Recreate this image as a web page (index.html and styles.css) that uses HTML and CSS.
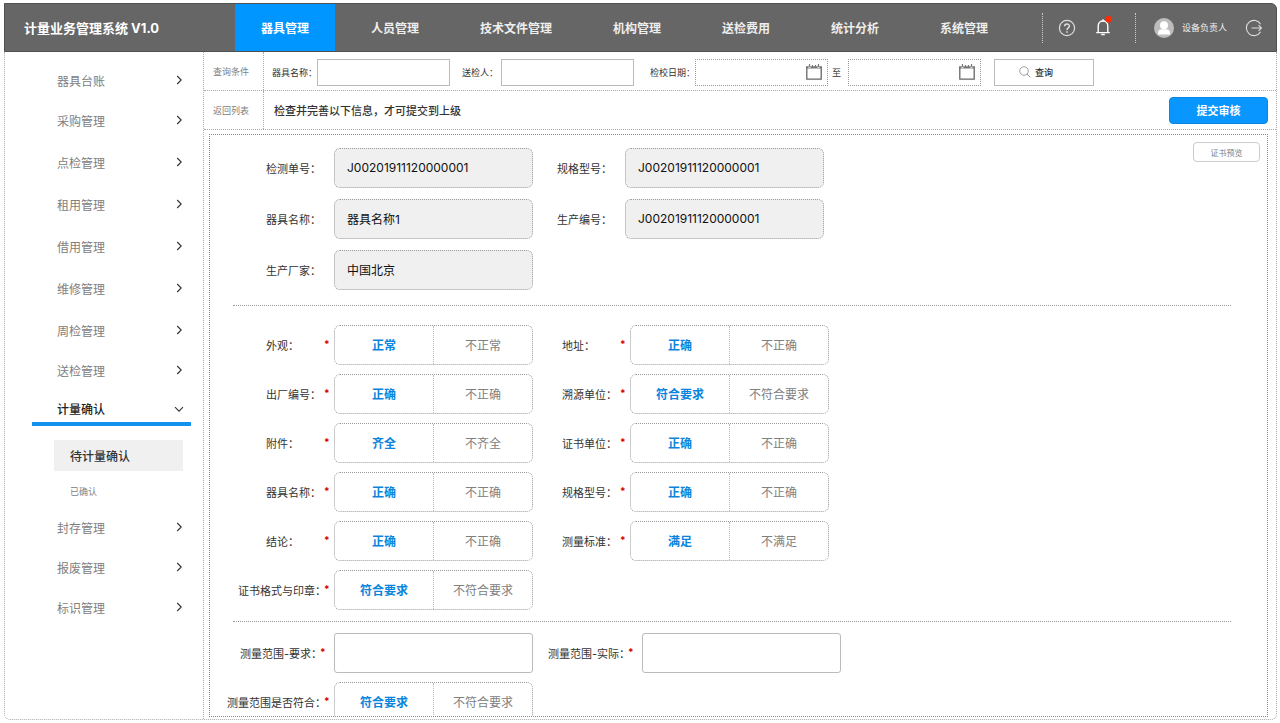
FILE: index.html
```html
<!DOCTYPE html>
<html lang="zh-CN">

<head>
    <meta charset="UTF-8">
    <meta name="viewport" content="width=device-width, initial-scale=1.0">
    <title>计量业务管理系统 V1.0</title>
    <link rel="stylesheet" href="styles.css">
</head>

<body>
    <!-- Shared icons -->
    <svg class="sprite" width="0" height="0" aria-hidden="true">
        <symbol id="arrow" viewBox="0 0 10 10">
            <path d="M3.2 1 L7.2 5 L3.2 9" fill="none" stroke="#333" stroke-width="1.1" />
        </symbol>
        <symbol id="calendar" viewBox="0 0 18 18">
            <path d="M1.8 3.5 V16.2 H16.2 V3.5" fill="none" stroke="#666" stroke-width="1.3" />
            <path d="M1.2 4.4 H16.8" stroke="#777" stroke-width="2.2" />
            <path d="M4.5 1 V4 M7.5 2 V4 M10.5 2 V4 M13.5 1 V4" stroke="#777" stroke-width="1.2" />
            <path d="M3.4 4.4 H5.6 M12.4 4.4 H14.6" stroke="#fff" stroke-width="0.8" />
        </symbol>
    </svg>

    <div class="app">
        <!-- Header Section -->
        <header class="header">
            <h1>计量业务管理系统 V1.0</h1>
            <nav class="main-nav">
                <a href="#" class="active">器具管理</a>
                <a href="#">人员管理</a>
                <a href="#">技术文件管理</a>
                <a href="#">机构管理</a>
                <a href="#">送检费用</a>
                <a href="#">统计分析</a>
                <a href="#">系统管理</a>
            </nav>
            <div class="tools">
                <button type="button" class="icon-btn" aria-label="帮助">
                    <svg width="18" height="18" viewBox="0 0 18 18" fill="none" stroke="#ddd">
                        <circle cx="9" cy="9" r="7.6" stroke-width="1.2" />
                        <path d="M6.6 7.2 C6.6 4.2 11.4 4.2 11.4 7.1 C11.4 9 9 8.9 9 11" stroke-width="1.5" />
                        <path d="M9 12.2 V13.8" stroke-width="1.6" />
                    </svg>
                </button>
                <button type="button" class="icon-btn bell" aria-label="消息">
                    <svg width="18" height="24" viewBox="0 0 18 24" fill="none">
                        <path d="M2.2 16.6 H15.8 M4.2 16.4 V10 C4.2 3.4 13.8 3.4 13.8 10 V16.4" stroke="#fff" stroke-width="1.4" />
                        <path d="M9 3.2 V5.2 M7.2 18.6 H10.8" stroke="#fff" stroke-width="1.5" />
                        <circle cx="14.6" cy="3.3" r="3.3" fill="#ff2b00" />
                    </svg>
                </button>
            </div>
            <div class="user">
                <svg width="20" height="20" viewBox="0 0 20 20">
                    <circle cx="10" cy="10" r="10" fill="#bdbdbd" />
                    <circle cx="10" cy="7.2" r="4" fill="#fff" />
                    <path d="M4 16.6 V14.6 C4 12.4 6 11.2 8 11.2 H12 C14 11.2 16 12.4 16 14.6 V16.6 Z" fill="#fff" />
                </svg>
                <span>设备负责人</span>
                <button type="button" class="icon-btn" aria-label="退出">
                    <svg width="18" height="18" viewBox="0 0 18 18" fill="none" stroke="#ddd" stroke-width="1.1">
                        <path d="M15.6 5.2 A7.6 7.6 0 1 0 15.6 12.8" />
                        <path d="M6.5 9 H16.4 M13.6 6.2 L16.4 9 L13.6 11.8" />
                    </svg>
                </button>
            </div>
        </header>

        <div class="body">
            <!-- Side Menu -->
            <aside class="sidebar">
                <nav>
                    <a href="#" class="item short">器具台账<svg><use href="#arrow" /></svg></a>
                    <a href="#" class="item">采购管理<svg><use href="#arrow" /></svg></a>
                    <a href="#" class="item">点检管理<svg><use href="#arrow" /></svg></a>
                    <a href="#" class="item">租用管理<svg><use href="#arrow" /></svg></a>
                    <a href="#" class="item">借用管理<svg><use href="#arrow" /></svg></a>
                    <a href="#" class="item">维修管理<svg><use href="#arrow" /></svg></a>
                    <a href="#" class="item">周检管理<svg><use href="#arrow" /></svg></a>
                    <a href="#" class="item short">送检管理<svg><use href="#arrow" /></svg></a>
                    <a href="#" class="item open">计量确认<svg><use href="#arrow" /></svg></a>
                    <div class="submenu">
                        <a href="#" class="current">待计量确认</a>
                        <a href="#">已确认</a>
                    </div>
                    <div class="menu-tail">
                        <a href="#" class="item">封存管理<svg><use href="#arrow" /></svg></a>
                        <a href="#" class="item">报废管理<svg><use href="#arrow" /></svg></a>
                        <a href="#" class="item">标识管理<svg><use href="#arrow" /></svg></a>
                    </div>
                </nav>
            </aside>

            <!-- Main Content -->
            <main class="content">
                <form class="bar">
                    <div class="bar-name">查询条件</div>
                    <div class="query">
                        <label for="q-name">器具名称：</label>
                        <input type="text" id="q-name">
                        <label for="q-sender" class="second">送检人：</label>
                        <input type="text" id="q-sender" class="sender">
                        <label for="q-from" class="third">检校日期：</label>
                        <div class="date">
                            <input type="text" id="q-from">
                            <svg><use href="#calendar" /></svg>
                        </div>
                        <label for="q-to" class="to">至</label>
                        <div class="date">
                            <input type="text" id="q-to">
                            <svg><use href="#calendar" /></svg>
                        </div>
                        <button type="button" class="search">
                            <svg width="12" height="12" viewBox="0 0 12 12" fill="none" stroke="#888">
                                <circle cx="5" cy="5" r="4.3" stroke-width="0.8" />
                                <path d="M8 8 L11.4 11.4" stroke-width="0.9" />
                            </svg>
                            查询
                        </button>
                    </div>
                </form>

                <div class="bar">
                    <a href="#" class="bar-name">返回列表</a>
                    <p class="hint">检查并完善以下信息，才可提交到上级</p>
                    <button type="button" class="submit">提交审核</button>
                </div>

                <form class="panel">
                    <button type="button" class="preview">证书预览</button>

                    <!-- Instrument info -->
                    <div class="fields info">
                        <div class="name"><label for="f-no">检测单号：</label></div>
                        <input type="text" id="f-no" value="J00201911120000001" readonly>
                        <div class="name"><label for="f-model">规格型号：</label></div>
                        <input type="text" id="f-model" value="J00201911120000001" readonly>
                        <div class="name"><label for="f-name">器具名称：</label></div>
                        <input type="text" id="f-name" value="器具名称1" readonly>
                        <div class="name"><label for="f-serial">生产编号：</label></div>
                        <input type="text" id="f-serial" value="J00201911120000001" readonly>
                        <div class="name"><label for="f-maker">生产厂家：</label></div>
                        <input type="text" id="f-maker" value="中国北京" readonly>
                    </div>

                    <hr>

                    <!-- Confirmation checks -->
                    <div class="fields checks">
                        <div class="name"><span id="c1">外观：</span><i>*</i></div>
                        <div class="choice" role="radiogroup" aria-labelledby="c1">
                            <label><input type="radio" name="c1" checked><span>正常</span></label>
                            <label><input type="radio" name="c1"><span>不正常</span></label>
                        </div>
                        <div class="name"><span id="c2">地址：</span><i>*</i></div>
                        <div class="choice" role="radiogroup" aria-labelledby="c2">
                            <label><input type="radio" name="c2" checked><span>正确</span></label>
                            <label><input type="radio" name="c2"><span>不正确</span></label>
                        </div>
                        <div class="name"><span id="c3">出厂编号：</span><i>*</i></div>
                        <div class="choice" role="radiogroup" aria-labelledby="c3">
                            <label><input type="radio" name="c3" checked><span>正确</span></label>
                            <label><input type="radio" name="c3"><span>不正确</span></label>
                        </div>
                        <div class="name"><span id="c4">溯源单位：</span><i>*</i></div>
                        <div class="choice" role="radiogroup" aria-labelledby="c4">
                            <label><input type="radio" name="c4" checked><span>符合要求</span></label>
                            <label><input type="radio" name="c4"><span>不符合要求</span></label>
                        </div>
                        <div class="name"><span id="c5">附件：</span><i>*</i></div>
                        <div class="choice" role="radiogroup" aria-labelledby="c5">
                            <label><input type="radio" name="c5" checked><span>齐全</span></label>
                            <label><input type="radio" name="c5"><span>不齐全</span></label>
                        </div>
                        <div class="name"><span id="c6">证书单位：</span><i>*</i></div>
                        <div class="choice" role="radiogroup" aria-labelledby="c6">
                            <label><input type="radio" name="c6" checked><span>正确</span></label>
                            <label><input type="radio" name="c6"><span>不正确</span></label>
                        </div>
                        <div class="name"><span id="c7">器具名称：</span><i>*</i></div>
                        <div class="choice" role="radiogroup" aria-labelledby="c7">
                            <label><input type="radio" name="c7" checked><span>正确</span></label>
                            <label><input type="radio" name="c7"><span>不正确</span></label>
                        </div>
                        <div class="name"><span id="c8">规格型号：</span><i>*</i></div>
                        <div class="choice" role="radiogroup" aria-labelledby="c8">
                            <label><input type="radio" name="c8" checked><span>正确</span></label>
                            <label><input type="radio" name="c8"><span>不正确</span></label>
                        </div>
                        <div class="name"><span id="c9">结论：</span><i>*</i></div>
                        <div class="choice" role="radiogroup" aria-labelledby="c9">
                            <label><input type="radio" name="c9" checked><span>正确</span></label>
                            <label><input type="radio" name="c9"><span>不正确</span></label>
                        </div>
                        <div class="name"><span id="c10">测量标准：</span><i>*</i></div>
                        <div class="choice" role="radiogroup" aria-labelledby="c10">
                            <label><input type="radio" name="c10" checked><span>满足</span></label>
                            <label><input type="radio" name="c10"><span>不满足</span></label>
                        </div>
                        <div class="name"><span id="c11">证书格式与印章：</span><i>*</i></div>
                        <div class="choice" role="radiogroup" aria-labelledby="c11">
                            <label><input type="radio" name="c11" checked><span>符合要求</span></label>
                            <label><input type="radio" name="c11"><span>不符合要求</span></label>
                        </div>
                    </div>

                    <hr class="tight">

                    <!-- Measuring range -->
                    <div class="fields range">
                        <div class="name wide"><label for="r-need">测量范围-要求：</label><i>*</i></div>
                        <input type="text" id="r-need">
                        <div class="name wide"><label for="r-real">测量范围-实际：</label><i>*</i></div>
                        <input type="text" id="r-real">
                        <div class="name"><span id="c12">测量范围是否符合：</span><i>*</i></div>
                        <div class="choice" role="radiogroup" aria-labelledby="c12">
                            <label><input type="radio" name="c12" checked><span>符合要求</span></label>
                            <label><input type="radio" name="c12"><span>不符合要求</span></label>
                        </div>
                    </div>
                </form>
            </main>
        </div>
    </div>
</body>

</html>
```
FILE: styles.css
```css
/* General Reset */
* {
    margin: 0;
    padding: 0;
    box-sizing: border-box;
}

body {
    font-family: Inter, "Noto Sans CJK SC", sans-serif;
    font-size: 12px;
    color: #333;
    background-color: white;
}

a {
    color: inherit;
    text-decoration: none;
}

input,
button {
    font-family: inherit;
    color: inherit;
    background-color: white;
    outline: none;
}

button {
    cursor: pointer;
}

.sprite {
    display: none;
}

.app {
    display: flex;
    flex-direction: column;
    height: 100vh;
    padding: 3px 3px 3px 4px;
}

/* Header Styling */
.header {
    display: flex;
    align-items: center;
    flex: none;
    height: 49px;
    padding-right: 13px;
    background-color: #666;
    border: 1px solid #505050;
    border-radius: 0 6px 0 0;
    color: white;
}

.header h1 {
    width: 230px;
    padding-left: 19px;
    font-size: 13px;
    font-weight: bold;
}

.main-nav {
    display: flex;
    align-self: stretch;
    gap: 1px;
}

.main-nav a {
    display: flex;
    align-items: center;
    padding: 0 30px;
    font-weight: bold;
    color: #eee;
}

.main-nav .active {
    margin-right: 5px;
    padding: 0 26px;
    background-color: #0096ff;
    color: white;
}

.tools,
.user {
    display: flex;
    align-items: center;
    height: 30px;
    border-left: 1px dotted #ccc;
}

.tools {
    gap: 18px;
    margin-left: auto;
    padding: 0 23px 0 15px;
}

.user {
    padding-left: 18px;
    font-size: 9px;
    color: #eee;
}

.user span {
    padding: 0 18px 0 8px;
}

.icon-btn {
    display: flex;
    border: none;
    background: none;
}

/* Body */
.body {
    display: flex;
    flex: 1;
    min-height: 0;
    border: 1px dotted #aaa;
    border-top: none;
    border-radius: 0 0 6px 6px;
}

/* Side Menu */
.sidebar {
    flex: none;
    width: 199px;
    padding: 9px 12px 0 27px;
    border-right: 1px dotted #aaa;
}

.item {
    display: flex;
    align-items: center;
    justify-content: space-between;
    height: 42px;
    padding: 0 7px 0 25px;
    color: #808080;
}

.item svg {
    width: 10px;
    height: 10px;
}

.item.short {
    height: 38px;
}

.item.open {
    height: 37px;
    padding-top: 6px;
    border-bottom: 4px solid #1292ee;
    font-weight: 500;
    color: #222;
}

.item.open svg {
    transform: rotate(90deg);
}

.submenu {
    display: flex;
    flex-direction: column;
    gap: 6px;
    padding: 14px 8px 0 22px;
}

.submenu a {
    padding-left: 16px;
    font-size: 9px;
    line-height: 30px;
    color: #808080;
}

.submenu .current {
    padding-top: 3px;
    background-color: #f0f0f0;
    font-size: 12px;
    font-weight: 500;
    line-height: 28px;
    color: #333;
}

.menu-tail .item {
    height: 40px;
}

/* Main Content Styling */
.content {
    display: flex;
    flex-direction: column;
    flex: 1;
    min-width: 0;
}

.bar {
    display: flex;
    align-items: center;
    flex: none;
    height: 39px;
    padding-right: 8px;
    border-bottom: 1px dotted #aaa;
}

.bar-name {
    display: flex;
    align-items: center;
    align-self: stretch;
    width: 60px;
    padding-left: 9px;
    border-right: 1px dotted #aaa;
    font-size: 9px;
    color: #808080;
}

.query {
    display: flex;
    align-items: center;
    padding: 2px 0 0 8px;
    font-size: 9px;
}

.query > input,
.date {
    width: 133px;
    height: 27px;
    border: 1px solid #bbb;
}

.query .second {
    margin-left: 12px;
}

.query .sender {
    margin-left: 3px;
}

.query .third {
    margin-left: 16px;
}

.query .to {
    padding: 0 7px 0 4px;
}

.date {
    display: flex;
    align-items: center;
    padding-right: 4px;
    border: 1px dotted #999;
}

.date input {
    flex: 1;
    min-width: 0;
    border: none;
}

.date svg {
    width: 18px;
    height: 18px;
}

.search {
    display: flex;
    align-items: center;
    justify-content: center;
    gap: 4px;
    width: 100px;
    height: 27px;
    margin-left: 13px;
    padding-right: 16px;
    border: 1px solid #bbb;
    font-size: 9px;
    font-weight: 500;
}

.hint {
    flex: 1;
    padding-left: 10px;
    font-size: 11px;
    font-weight: 500;
}

.submit {
    width: 99px;
    height: 27px;
    background-color: #0996ff;
    border: 1px solid #0a86e4;
    border-radius: 4px;
    font-size: 11px;
    font-weight: bold;
    color: white;
}

/* Form Panel */
.panel {
    flex: 1;
    min-height: 0;
    margin: 4px 8px 2px 5px;
    padding-top: 13px;
    overflow: hidden;
    border: 1px dotted #888;
}

.preview {
    float: right;
    width: 67px;
    height: 20px;
    margin: -6px 7px 0 0;
    border: 1px solid #ccc;
    border-radius: 4px;
    font-size: 8px;
    color: #808080;
}

.panel hr {
    margin: 15px 36px 19px 23px;
    border: none;
    border-top: 1px dotted #999;
}

.panel .tight {
    margin-top: 11px;
    margin-bottom: 11px;
}

.fields {
    display: grid;
    grid-auto-rows: 40px;
    row-gap: 9px;
}

.info {
    grid-template-columns: 124px 199px 92px 199px;
    row-gap: 11px;
}

.checks {
    grid-template-columns: 124px 199px 97px 199px;
}

.range {
    grid-template-columns: 124px 199px 109px 199px;
}

.name {
    display: flex;
    align-items: center;
    justify-content: flex-end;
    padding-right: 6px;
    font-size: 11px;
    white-space: nowrap;
}

.name label,
.name span {
    min-width: 60px;
}

.name i {
    width: 4px;
    margin-left: -2px;
    padding-bottom: 3px;
    font-size: 10px;
    font-style: normal;
    font-weight: bold;
    color: #d00000;
}

.info .name {
    padding-right: 8px;
}

.name.wide {
    padding-right: 10px;
}

.fields > input {
    width: 100%;
    padding: 0 12px;
    border: 1px solid #bbb;
    border-radius: 3px;
    font-size: 12px;
    color: #111;
}

.info > input {
    padding-bottom: 2px;
    background-color: #f0f0f0;
    border: 1px dotted #999;
    border-radius: 6px;
}

.choice {
    display: grid;
    grid-template-columns: 98px 1fr;
    border: 1px dotted #999;
    border-radius: 6px;
}

.choice label {
    display: flex;
    align-items: center;
    justify-content: center;
    padding-bottom: 2px;
    color: #808080;
    cursor: pointer;
}

.choice label + label {
    border-left: 1px dotted #bbb;
}

.choice input {
    appearance: none;
    width: 0;
    height: 0;
}

.choice input:checked + span {
    font-weight: bold;
    color: #0a84dc;
}
```
